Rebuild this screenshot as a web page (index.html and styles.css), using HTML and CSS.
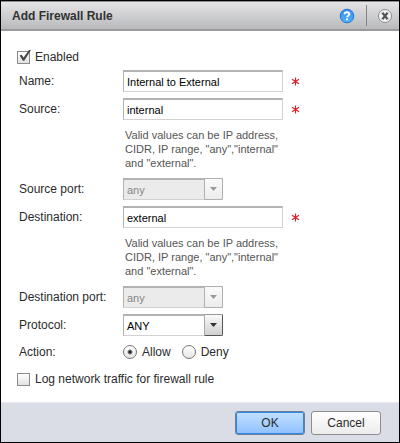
FILE: index.html
```html
<!DOCTYPE html>
<html lang="en">
<head>
<meta charset="utf-8">
<title>Add Firewall Rule</title>
<link rel="stylesheet" href="styles.css">
</head>
<body>
<form class="dialog">
  <header class="titlebar">
    <h1 class="title">Add Firewall Rule</h1>
    <button type="button" class="icon-button" aria-label="Help">
      <svg width="16" height="16" viewBox="0 0 16 16">
        <defs><linearGradient id="help-fill" x1="0" y1="0" x2="0" y2="1"><stop offset="0" stop-color="#3a8ee8"/><stop offset="1" stop-color="#50b2ff"/></linearGradient></defs>
        <circle cx="8" cy="8" r="6.8" fill="url(#help-fill)" stroke="#1f74d6"/>
        <path d="M5.6 6.2C5.6 3.6 10.4 3.6 10.4 6.1C10.4 7.7 8 7.6 8 9.3" fill="none" stroke="#fff" stroke-width="1.8"/>
        <rect x="7" y="10.4" width="2" height="1.8" fill="#fff"/>
      </svg>
    </button>
    <span class="divider"></span>
    <button type="button" class="icon-button" aria-label="Close">
      <svg width="16" height="16" viewBox="0 0 16 16">
        <circle cx="8" cy="8" r="6.5" fill="#f2f2f2" stroke="#8e8e8e"/>
        <path d="M5.6 5L10.4 11M10.4 5L5.6 11" stroke="#555" stroke-width="2.2"/>
        <path d="M4.6 5.2H7M9 5.2H11.4M4.6 10.8H7M9 10.8H11.4" stroke="#555"/>
      </svg>
    </button>
  </header>

  <main class="content">
    <div class="check-row">
      <input type="checkbox" class="checkbox" id="enabled" checked>
      <label for="enabled">Enabled</label>
    </div>

    <div class="fields">
      <label for="name">Name:</label>
      <div class="control">
        <input type="text" class="textbox" id="name" value="Internal to External">
        <svg class="required" width="9" height="9" viewBox="0 0 9 9"><path d="M4.5 0.5V8.5M1 2.2L8 6.8M8 2.2L1 6.8"/></svg>
      </div>

      <label for="source">Source:</label>
      <div class="control">
        <input type="text" class="textbox" id="source" value="internal">
        <svg class="required" width="9" height="9" viewBox="0 0 9 9"><path d="M4.5 0.5V8.5M1 2.2L8 6.8M8 2.2L1 6.8"/></svg>
      </div>
      <p class="hint">Valid values can be IP address,<br>CIDR, IP range, "any","internal"<br>and "external".</p>

      <label for="source-port">Source port:</label>
      <div class="combo">
        <select id="source-port" class="select" disabled><option>any</option></select>
        <span class="arrow arrow-off"></span>
      </div>

      <label for="destination">Destination:</label>
      <div class="control">
        <input type="text" class="textbox" id="destination" value="external">
        <svg class="required" width="9" height="9" viewBox="0 0 9 9"><path d="M4.5 0.5V8.5M1 2.2L8 6.8M8 2.2L1 6.8"/></svg>
      </div>
      <p class="hint">Valid values can be IP address,<br>CIDR, IP range, "any","internal"<br>and "external".</p>

      <label for="destination-port">Destination port:</label>
      <div class="combo">
        <select id="destination-port" class="select" disabled><option>any</option></select>
        <span class="arrow arrow-off"></span>
      </div>

      <label for="protocol">Protocol:</label>
      <div class="combo">
        <select id="protocol" class="select"><option>ANY</option></select>
        <span class="arrow"></span>
      </div>

      <span id="action-label">Action:</span>
      <div class="radios" role="radiogroup" aria-labelledby="action-label">
        <input type="radio" class="radio" name="action" id="allow" checked>
        <label for="allow">Allow</label>
        <input type="radio" class="radio" name="action" id="deny">
        <label for="deny">Deny</label>
      </div>
    </div>

    <div class="check-row">
      <input type="checkbox" class="checkbox" id="log">
      <label for="log">Log network traffic for firewall rule</label>
    </div>
  </main>

  <footer class="footer">
    <button type="submit" class="button button-primary">OK</button>
    <button type="button" class="button">Cancel</button>
  </footer>
</form>
</body>
</html>
```
FILE: styles.css
```css
* {
  box-sizing: border-box;
}

body {
  margin: 0;
  background: #000;
  color: #2b2b2b;
  font: 12px/16px "Liberation Sans", Arial, sans-serif;
}

.dialog {
  display: flex;
  flex-direction: column;
  min-height: 100vh;
  border: 1px solid #000;
  background: #fff;
}

.titlebar {
  display: flex;
  align-items: center;
  height: 30px;
  padding: 0 6px 0 11px;
  border-top: 1px solid #8f8a92;
  border-bottom: 2px solid #9a9a9c;
  background: linear-gradient(#e4e4e6, #b9babd);
}

.title {
  flex: 1;
  margin: 0;
  font-size: 12px;
  color: #333;
}

.icon-button {
  display: flex;
  padding: 0;
  border: 0;
  background: none;
}

.divider {
  width: 1px;
  height: 21px;
  margin: 0 10px 0 11px;
  background: #858587;
}

.content {
  flex: 1;
  padding: 18px 16px 12px;
}

.check-row {
  display: flex;
  align-items: center;
  gap: 5px;
}

.checkbox {
  appearance: none;
  width: 13px;
  height: 13px;
  margin: 0;
  border: 1px solid #8c8c8c;
  background: linear-gradient(#fff, #e2e2e2);
}

.checkbox:checked {
  position: relative;
}

.checkbox:checked::after {
  content: "";
  position: absolute;
  left: 1px;
  top: -2px;
  width: 12px;
  height: 12px;
  background: #4a4a4a;
  clip-path: polygon(5% 50%, 22% 44%, 38% 66%, 86% 0, 100% 5%, 44% 94%, 32% 94%);
}

.fields {
  display: grid;
  grid-template-columns: 104px 1fr;
  row-gap: 6px;
  align-items: center;
  padding: 5px 2px 9px;
}

.control {
  display: flex;
  align-items: center;
  gap: 8px;
}

.textbox,
.select {
  appearance: none;
  height: 22px;
  margin: 0;
  padding: 0 3px;
  border: 1px solid #d2d2d2;
  border-top: 2px solid #b3b3b3;
  border-left-color: #b3b3b3;
  border-radius: 0;
  background: #fff;
  color: #000;
  font: 11px/16px "Liberation Sans", Arial, sans-serif;
}

.textbox {
  width: 160px;
}

.required {
  fill: none;
  stroke: #dc2028;
  stroke-width: 1.2;
}

.hint {
  grid-column: 2;
  margin: 2px;
  color: #555;
  font-size: 11px;
  line-height: 14px;
}

.combo {
  position: relative;
  width: 100px;
}

.select {
  display: block;
  width: 100%;
}

.select:disabled {
  background: #ebebeb;
  color: #858585;
  opacity: 1;
}

.arrow {
  position: absolute;
  right: 0;
  top: 0;
  width: 19px;
  height: 22px;
  border: 1px solid #555;
  border-left-color: #aaa;
  border-top-color: #999;
  border-radius: 0 2px 2px 0;
  background: linear-gradient(#fafafa, #d0d0d0);
  pointer-events: none;
}

.arrow::after {
  content: "";
  position: absolute;
  left: 5px;
  top: 8px;
  width: 7px;
  height: 4px;
  background: #333;
  clip-path: polygon(0 0, 100% 0, 50% 100%);
}

.arrow-off {
  border-color: #b0b0b0;
  background: linear-gradient(#fafafa, #ececec);
}

.arrow-off::after {
  background: #999;
}

.radios {
  display: flex;
  align-items: center;
  height: 20px;
}

.radio {
  appearance: none;
  width: 14px;
  height: 14px;
  margin: 0 5px 0 0;
  border: 1px solid #777;
  border-radius: 50%;
  background: linear-gradient(#fff, #e6e6e6);
}

.radio:checked {
  background: radial-gradient(circle, #222 1px, transparent 3px), linear-gradient(#fff, #e6e6e6);
}

.radios label {
  margin-right: 11px;
}

.footer {
  display: flex;
  justify-content: flex-end;
  gap: 6px;
  padding: 8px 18px 7px;
  border-top: 1px solid #e6e9ed;
  background: #dadde5;
}

.button {
  width: 70px;
  height: 24px;
  padding: 0;
  border: 1px solid #8d8d8d;
  border-radius: 3px;
  background: linear-gradient(#fff, #ececec);
  color: #2b2b2b;
  font: 12px/16px "Liberation Sans", Arial, sans-serif;
}

.button-primary {
  border-color: #6b7f99;
  background: linear-gradient(#c3e1ff, #8fc0ff);
  box-shadow: inset 0 0 0 1px #3388e6;
}
```
